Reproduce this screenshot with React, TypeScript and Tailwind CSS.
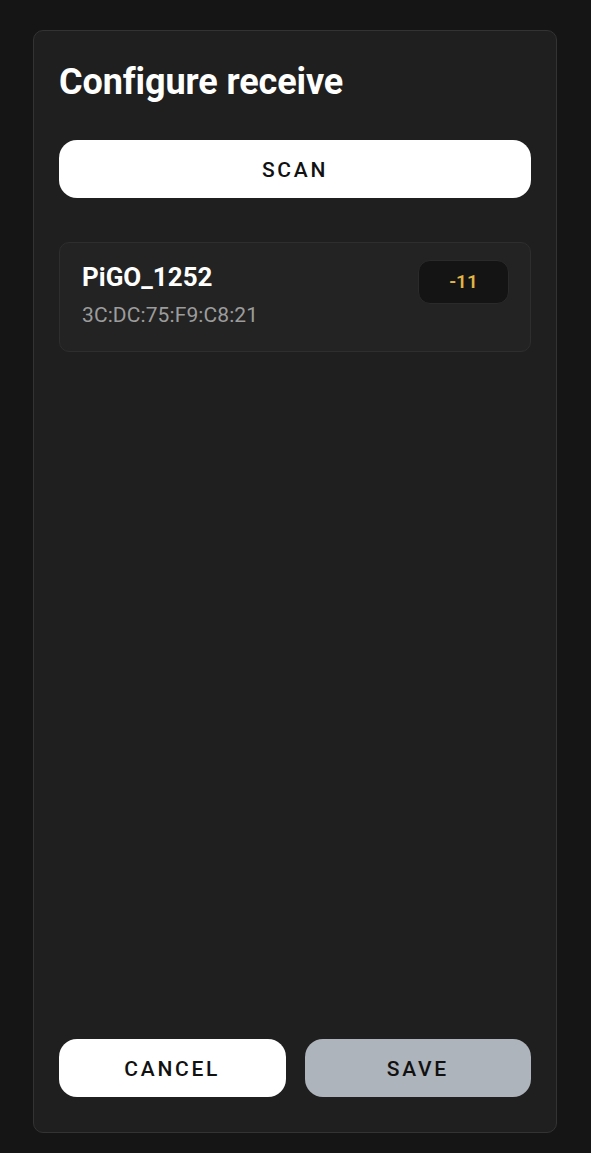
export default function App() {
  return (
    <div className="min-h-screen w-full bg-[#151515] pt-[30px] pb-[20px] pl-[33px] pr-[34px] flex font-['Roboto',sans-serif]">
      <div className="flex-1 flex flex-col rounded-[10px] border border-[#333333] bg-[#1f1f1f] px-[25px] pt-[27px] pb-[35px]">
        <h1 className="text-[36px] font-bold text-white leading-[48px] tracking-[-0.1px]">Configure receive</h1>

        <button className="mt-[34px] h-[58px] w-full rounded-[18px] bg-white pt-[4px] text-[21px] font-medium tracking-[0.13em] text-[#111]">
          SCAN
        </button>

        <div className="mt-[44px] flex items-start justify-between rounded-[10px] border border-[#2e2e2e] bg-[#232323] pl-[22px] pr-[21px] pt-[17px] h-[110px]">
          <div className="flex flex-col">
            <span className="text-[26px] font-bold leading-[34px] text-white">PiGO_1252</span>
            <span className="mt-[8px] text-[21px] leading-[26px] tracking-[0.1px] text-[#9c9c9c]">3C:DC:75:F9:C8:21</span>
          </div>
          <div className="flex h-[44px] w-[91px] items-center justify-center rounded-[12px] border border-[#2a2a2a] bg-[#141414] text-[19px] font-semibold text-[#e2b547]">
            -11
          </div>
        </div>

        <div className="flex-1" />

        <div className="flex gap-[19px]">
          <button className="h-[58px] flex-1 rounded-[18px] bg-white pt-[4px] text-[21px] font-medium tracking-[0.13em] text-[#111]">
            CANCEL
          </button>
          <button className="h-[58px] flex-1 rounded-[18px] bg-[#adb4bb] pt-[4px] text-[21px] font-medium tracking-[0.13em] text-[#111]">
            SAVE
          </button>
        </div>
      </div>
    </div>
  )
}
